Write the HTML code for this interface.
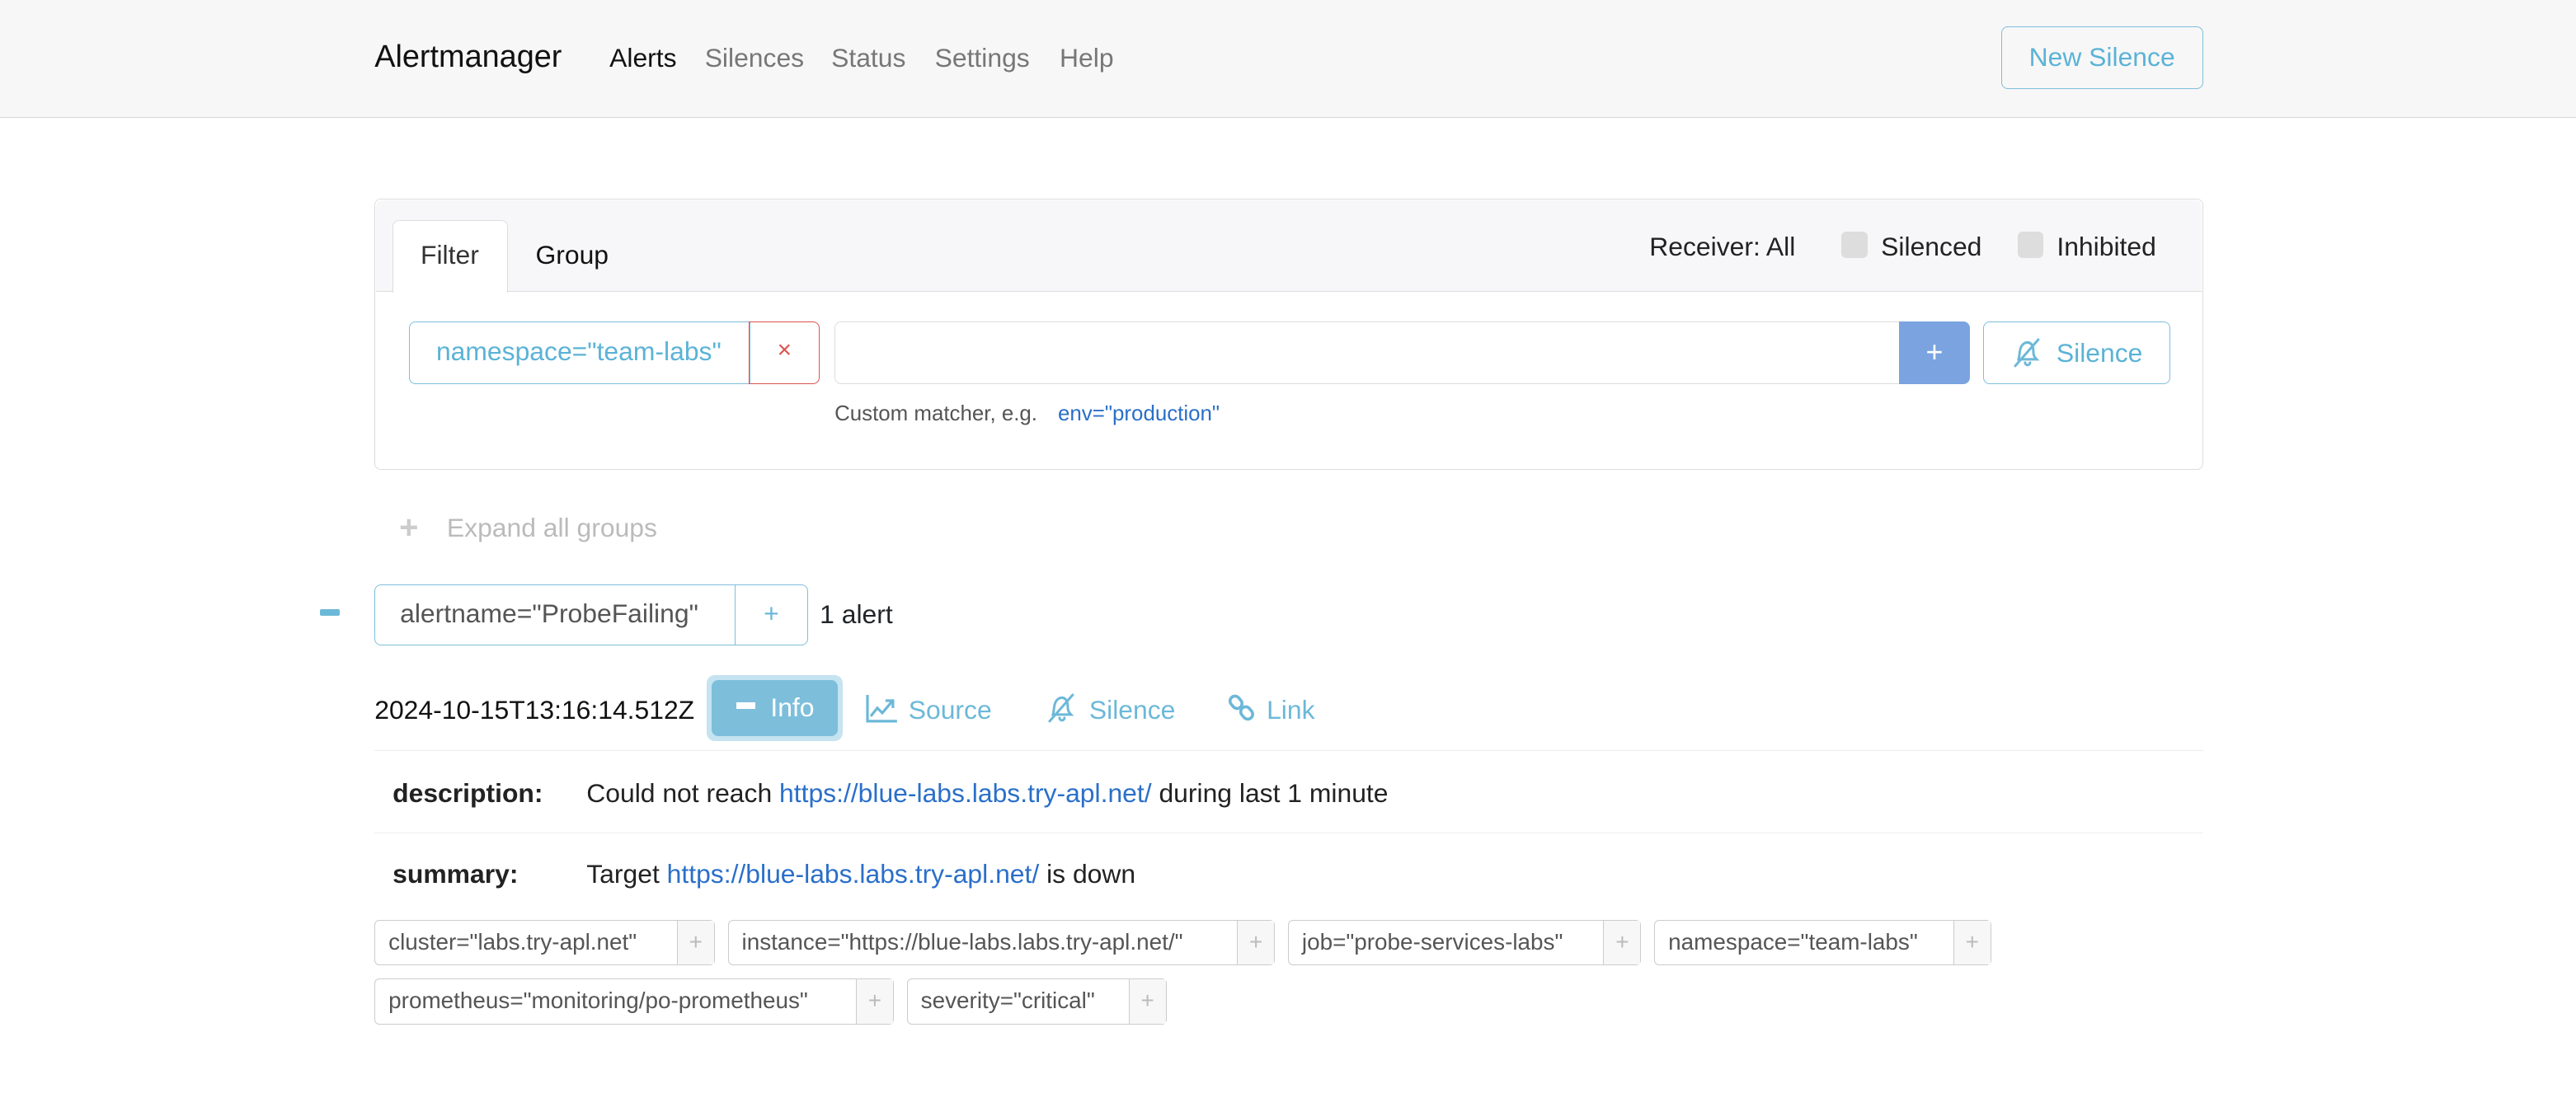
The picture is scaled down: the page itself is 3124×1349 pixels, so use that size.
<!DOCTYPE html>
<html><head><meta charset="utf-8"><style>
html,body{margin:0;padding:0;background:#fff}
body{width:1568px;height:677px;zoom:1.9923;position:relative;overflow:hidden;font-family:"Liberation Sans",Arial,sans-serif;color:#212529;font-size:16px}
.a{position:absolute;white-space:nowrap}
.nav{left:0;top:0;width:1568px;height:72px;background:#f7f7f7;border-bottom:1px solid #d8d8d8;box-sizing:border-box}
.link{color:#777}
.btn-o{border:1px solid #7dbfdb;color:#5bb3d6;border-radius:4px;box-sizing:border-box;display:flex;align-items:center;justify-content:center}
.card{left:228px;top:121px;width:1113px;height:165px;border:1px solid #ddd;border-radius:4px;box-sizing:border-box}
.chdr{left:229px;top:122px;width:1111px;height:55px;background:#f7f7f9;border-bottom:1px solid #ddd;border-radius:4px 4px 0 0}
.cb{width:16px;height:16px;background:#ddd;border-radius:3px}
.lbl{height:28px;border:1px solid #ccc;border-radius:3px;box-sizing:border-box;font-size:14px;color:#555;display:flex}
.lbl span{padding:0 8px;line-height:26px}
.lbl i{font-style:normal;width:22px;background:#f7f7f7;border-left:1px solid #ccc;color:#bbb;text-align:center;line-height:26px}
.blue{color:#2a6fc9}
.act{color:#6cb8d8;font-size:16px}
</style></head><body>
<div class="a nav"></div>
<div class="a" style="left:228px;top:24px;font-size:19px;color:#111">Alertmanager</div>
<div class="a" style="left:371px;top:26px;color:#111">Alerts</div>
<div class="a link" style="left:429px;top:26px">Silences</div>
<div class="a link" style="left:506px;top:26px">Status</div>
<div class="a link" style="left:569px;top:26px">Settings</div>
<div class="a link" style="left:645px;top:26px">Help</div>
<div class="a btn-o" style="left:1218px;top:16px;width:123px;height:38px">New Silence</div>

<div class="a card"></div>
<div class="a chdr"></div>
<div class="a" style="left:239px;top:134px;width:70px;height:44px;background:#fff;border:1px solid #ddd;border-bottom:none;border-radius:4px 4px 0 0;box-sizing:border-box"></div>
<div class="a" style="left:256px;top:146px;color:#333">Filter</div>
<div class="a" style="left:326px;top:146px;color:#111">Group</div>
<div class="a" style="left:1004px;top:141px;color:#222">Receiver: All</div>
<div class="a cb" style="left:1121px;top:141px"></div>
<div class="a" style="left:1145px;top:141px;color:#222">Silenced</div>
<div class="a cb" style="left:1228px;top:141px"></div>
<div class="a" style="left:1252px;top:141px;color:#222">Inhibited</div>

<div class="a" style="left:249px;top:196px;width:208px;height:38px;border:1px solid #7dbfdb;border-radius:4px 0 0 4px;box-sizing:border-box;color:#5bb3d6;line-height:36px;padding-left:16px">namespace="team-labs"</div>
<div class="a" style="left:456px;top:196px;width:43px;height:38px;border:1px solid #d9534f;border-radius:0 4px 4px 0;box-sizing:border-box;color:#d9534f;text-align:center;line-height:34px;font-size:15px">×</div>
<div class="a" style="left:508px;top:196px;width:649px;height:38px;border:1px solid #ddd;border-right:none;border-radius:4px 0 0 4px;box-sizing:border-box"></div>
<div class="a" style="left:1156px;top:196px;width:43px;height:38px;background:#7aa3df;border-radius:0 4px 4px 0;color:#fff;text-align:center;line-height:38px;font-size:18px">+</div>
<div class="a btn-o" style="left:1207px;top:196px;width:114px;height:38px">
<svg width="20" height="20" viewBox="0 0 20 20" style="margin-right:8px"><g fill="none" stroke="#6cb8d8" stroke-width="1.5" stroke-linecap="round"><path d="M5 14 C6 11 5 6 9 4 C12 3 14 5 14 9 C14 12 15 13 16 14 Z"/><path d="M9 16 a1.5 1.5 0 0 0 3 0"/><path d="M3 18 L17 2"/></g></svg>Silence</div>
<div class="a" style="left:508px;top:245px;font-size:13px;color:#555">Custom matcher, e.g.</div>
<div class="a blue" style="left:644px;top:245px;font-size:13px">env="production"</div>

<div class="a" style="left:243px;top:310px;color:#ccc;font-size:20px;font-weight:bold">+</div>
<div class="a" style="left:272px;top:312px;color:#bbb">Expand all groups</div>

<div class="a" style="left:195px;top:371px;width:12px;height:4px;background:#6cb8d8;border-radius:1px"></div>
<div class="a" style="left:228px;top:356px;width:264px;height:37px;border:1px solid #7dbfdb;border-radius:4px;box-sizing:border-box;display:flex">
<span style="width:219px;border-right:1px solid #7dbfdb;color:#555;line-height:35px;padding-left:15px;box-sizing:border-box">alertname="ProbeFailing"</span><span style="flex:1;text-align:center;color:#6cb8d8;line-height:35px">+</span></div>
<div class="a" style="left:499px;top:365px">1 alert</div>

<div class="a" style="left:228px;top:423px;color:#111">2024-10-15T13:16:14.512Z</div>
<div class="a" style="left:430px;top:411px;width:83px;height:40px;border-radius:5px;background:#c5e3f0"></div>
<div class="a" style="left:433px;top:414px;width:77px;height:34px;border-radius:4px;background:#7dbfdb;color:#fff;line-height:34px"><span style="display:inline-block;width:12px;height:4px;background:#fff;margin:0 9px 4px 15px;vertical-align:middle"></span>Info</div>
<svg class="a" style="left:527px;top:423px" width="19" height="17" viewBox="0 0 19 17"><g fill="none" stroke="#6cb8d8" stroke-width="1.6"><path d="M1 0 V16 H19"/><path d="M3 13 L7 8 L10 11 L16 4"/><path d="M12 3.5 H16.5 V8" /></g></svg>
<div class="a act" style="left:553px;top:423px">Source</div>
<svg class="a" style="left:636px;top:421px" width="20" height="20" viewBox="0 0 20 20"><g fill="none" stroke="#6cb8d8" stroke-width="1.5" stroke-linecap="round"><path d="M5 14 C6 11 5 6 9 4 C12 3 14 5 14 9 C14 12 15 13 16 14 Z"/><path d="M9 16 a1.5 1.5 0 0 0 3 0"/><path d="M3 18 L17 2"/></g></svg>
<div class="a act" style="left:663px;top:423px">Silence</div>
<svg class="a" style="left:748px;top:422px" width="16" height="18" viewBox="0 0 16 18"><g fill="none" stroke="#6cb8d8" stroke-width="1.8"><rect x="1.5" y="1.5" width="6" height="8" rx="3" transform="rotate(-40 4.5 5.5)"/><rect x="8" y="8" width="6" height="8" rx="3" transform="rotate(-40 11 12)"/></g></svg>
<div class="a act" style="left:771px;top:423px">Link</div>

<div class="a" style="left:228px;top:457px;width:1113px;border-top:1px solid #e9ecef"></div>
<div class="a" style="left:239px;top:474px;font-weight:bold;color:#222">description:</div>
<div class="a" style="left:357px;top:474px;color:#222">Could not reach <span class="blue">https://blue-labs.labs.try-apl.net/</span> during last 1 minute</div>
<div class="a" style="left:228px;top:507px;width:1113px;border-top:1px solid #e9ecef"></div>
<div class="a" style="left:239px;top:523px;font-weight:bold;color:#222">summary:</div>
<div class="a" style="left:357px;top:523px;color:#222">Target <span class="blue">https://blue-labs.labs.try-apl.net/</span> is down</div>

<div class="a lbl" style="left:228px;top:560px;width:207px"><span style="flex:1">cluster="labs.try-apl.net"</span><i>+</i></div>
<div class="a lbl" style="left:443px;top:560px;width:333px"><span style="flex:1">instance="https://blue-labs.labs.try-apl.net/"</span><i>+</i></div>
<div class="a lbl" style="left:784px;top:560px;width:215px"><span style="flex:1">job="probe-services-labs"</span><i>+</i></div>
<div class="a lbl" style="left:1007px;top:560px;width:205px"><span style="flex:1">namespace="team-labs"</span><i>+</i></div>
<div class="a lbl" style="left:228px;top:596px;width:316px"><span style="flex:1">prometheus="monitoring/po-prometheus"</span><i>+</i></div>
<div class="a lbl" style="left:552px;top:596px;width:158px"><span style="flex:1">severity="critical"</span><i>+</i></div>
</body></html>
